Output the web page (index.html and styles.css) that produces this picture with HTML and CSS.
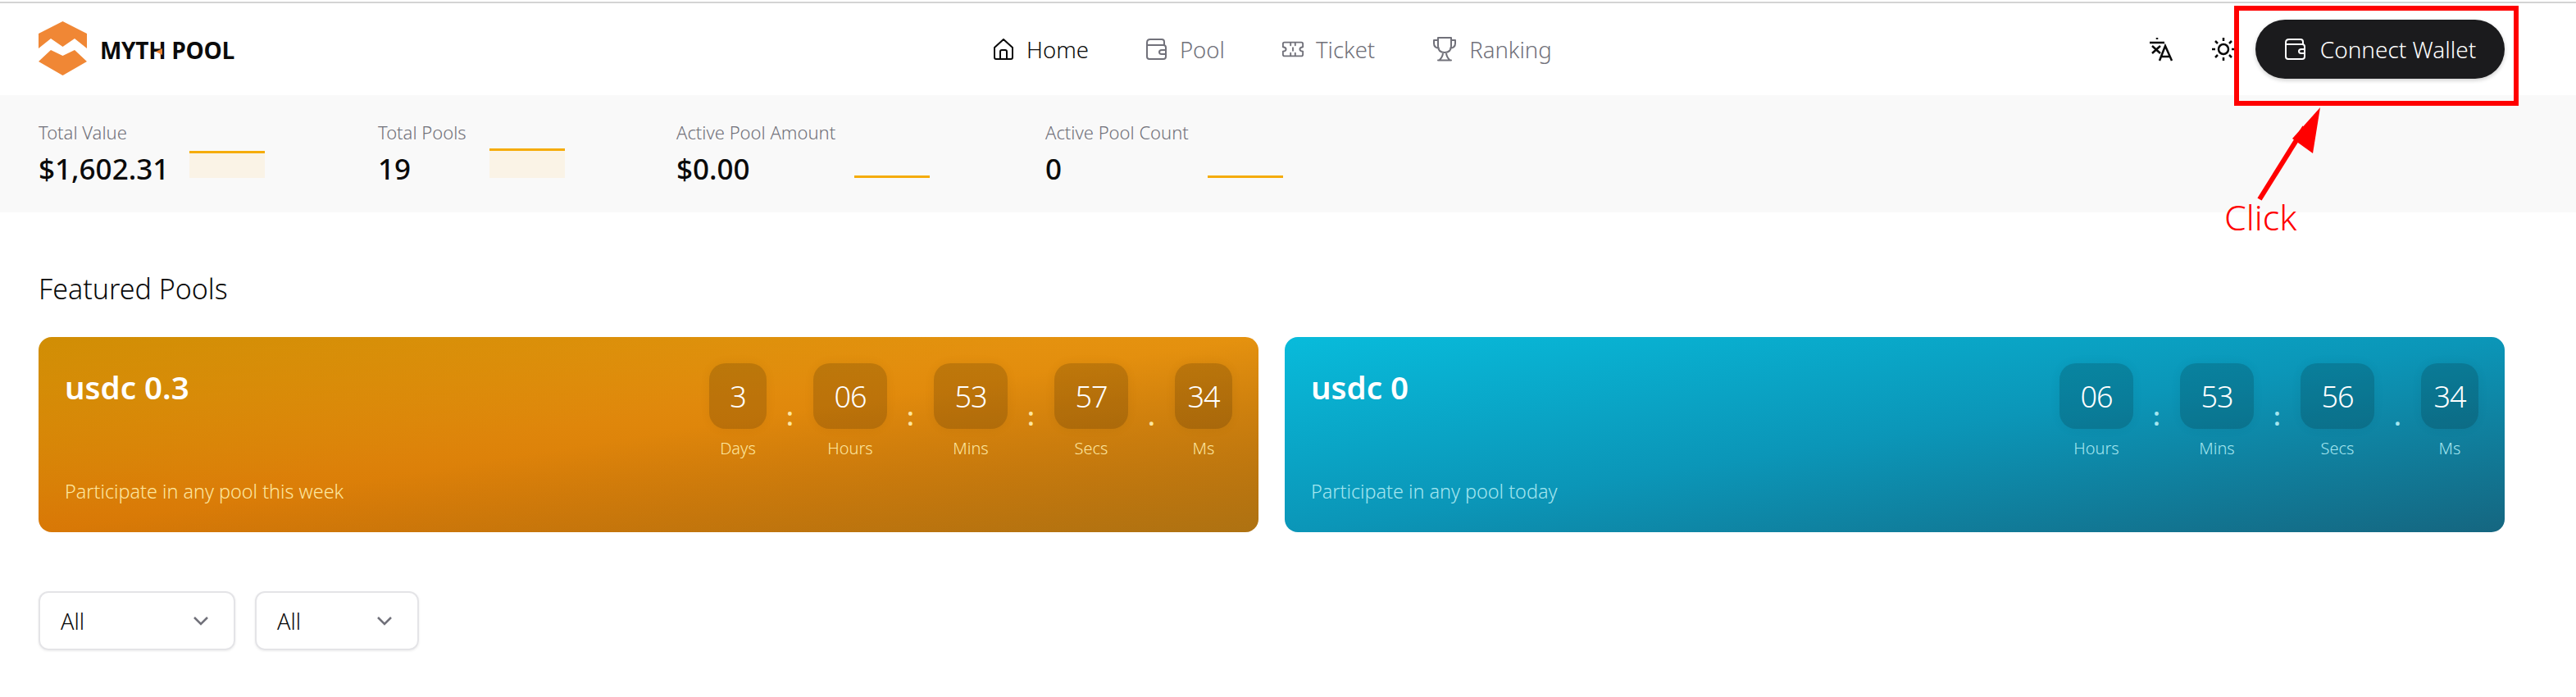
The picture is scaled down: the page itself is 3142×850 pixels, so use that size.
FILE: index.html
```html
<!DOCTYPE html>
<html lang="en">
<head>
  <meta charset="UTF-8">
  <title>Myth Pool</title>
  <link rel="stylesheet" href="styles.css">
</head>
<body>

  <header class="topbar">
    <a class="logo">
      <svg class="logo-mark" viewBox="0 0 59 66" width="59" height="66">
        <path fill="#f08735" d="M29.5 0 L59 15 V33 L44 21 L29.5 31 L15 21 L0 33 V15 Z"/>
        <path fill="#f08735" d="M0 49 L15 35 L29.5 42 L44 35 L59 49 L29.5 66 Z"/>
      </svg>
      <span class="logo-text">MYTH POOL<i class="logo-wedge"></i></span>
    </a>

    <nav class="nav">
      <a class="nav-item active">
        <svg class="nav-icon" viewBox="0 0 28 28"><path d="M3 12 L14 2 L25 12 V24 Q25 26 23 26 H5 Q3 26 3 24 Z M10 26 V17 Q10 15 12 15 H16 Q18 15 18 17 V26"/></svg>
        Home
      </a>
      <a class="nav-item">
        <svg class="nav-icon" viewBox="0 0 28 28"><path d="M23 9 V5 Q23 2 20 2 H6 Q2 2 2 6 V23 Q2 26 5 26 H22 Q25 26 25 23 V12 Q25 9 22 9 H2 M25 15 H20 Q17 15 17 17.5 Q17 20 20 20 H25"/></svg>
        Pool
      </a>
      <a class="nav-item">
        <svg class="nav-icon" viewBox="0 0 30 28"><path d="M4 5 H26 Q28 5 28 7 V11 Q24 11.500 24 14 Q24 16.500 28 17 V21 Q28 23 26 23 H4 Q2 23 2 21 V17 Q6 16.500 6 14 Q6 11.500 2 11 V7 Q2 5 4 5 Z M12 5 V9 M18 5 V9 M15 12 V16 M12 19 V23 M18 19 V23"/></svg>
        Ticket
      </a>
      <a class="nav-item">
        <svg class="nav-icon nav-icon-wide" viewBox="0 0 32 32"><path d="M8 2 H24 V12 Q24 20 16 20 Q8 20 8 12 Z M8 5 H3 V9 Q3 14 9 15 M24 5 H29 V9 Q29 14 23 15 M14 20 Q14 25 10 29 M18 20 Q18 25 22 29 M8 29.500 H24"/></svg>
        Ranking
      </a>
    </nav>

    <div class="actions">
      <svg class="action-icon" viewBox="0 0 30 30"><path d="M1 7 H19 M10 1 V3 M4 11 L14 20 M14 11 L4 20 M13 29 L20 11 L28 29 M15.500 24 H25"/></svg>
      <svg class="action-icon" viewBox="0 0 30 30"><circle cx="15" cy="15" r="6"/><path d="M15 1 V5 M15 25 V29 M1 15 H5 M25 15 H29 M5 5 L8 8 M22 22 L25 25 M5 25 L8 22 M22 8 L25 5"/></svg>
      <button class="connect-btn">
        <svg class="btn-icon" viewBox="0 0 28 28"><path d="M23 8 V5 Q23 2 20 2 H6 Q2 2 2 6 V23 Q2 26 5 26 H22 Q25 26 25 23 V11 Q25 8 22 8 H2 M25 14 H21 Q18 14 18 16.500 Q18 19 21 19 H25"/></svg>
        Connect Wallet
      </button>
    </div>
  </header>

  <section class="stats">
    <div class="stat stat-value">
      <div class="stat-text">
        <div class="stat-label">Total Value</div>
        <div class="stat-number">$1,602.31</div>
      </div>
      <div class="spark" style="height:33px"></div>
    </div>
    <div class="stat stat-pools">
      <div class="stat-text">
        <div class="stat-label">Total Pools</div>
        <div class="stat-number">19</div>
      </div>
      <div class="spark" style="height:36px"></div>
    </div>
    <div class="stat stat-amount">
      <div class="stat-text">
        <div class="stat-label">Active Pool Amount</div>
        <div class="stat-number">$0.00</div>
      </div>
      <div class="spark" style="height:2px"></div>
    </div>
    <div class="stat stat-count">
      <div class="stat-text">
        <div class="stat-label">Active Pool Count</div>
        <div class="stat-number">0</div>
      </div>
      <div class="spark" style="height:2px"></div>
    </div>
  </section>

  <main class="content">
    <h2 class="section-title">Featured Pools</h2>

    <div class="cards">
      <div class="card card-orange">
        <div class="card-info">
          <div class="card-title">usdc 0.3</div>
          <div class="card-sub">Participate in any pool this week</div>
        </div>
        <div class="timer">
          <div class="unit"><div class="num num-sm">3</div><div class="unit-label">Days</div></div>
          <div class="sep">:</div>
          <div class="unit"><div class="num">06</div><div class="unit-label">Hours</div></div>
          <div class="sep">:</div>
          <div class="unit"><div class="num">53</div><div class="unit-label">Mins</div></div>
          <div class="sep">:</div>
          <div class="unit"><div class="num">57</div><div class="unit-label">Secs</div></div>
          <div class="sep">.</div>
          <div class="unit"><div class="num num-sm">34</div><div class="unit-label">Ms</div></div>
        </div>
      </div>

      <div class="card card-blue">
        <div class="card-info">
          <div class="card-title">usdc 0</div>
          <div class="card-sub">Participate in any pool today</div>
        </div>
        <div class="timer">
          <div class="unit"><div class="num">06</div><div class="unit-label">Hours</div></div>
          <div class="sep">:</div>
          <div class="unit"><div class="num">53</div><div class="unit-label">Mins</div></div>
          <div class="sep">:</div>
          <div class="unit"><div class="num">56</div><div class="unit-label">Secs</div></div>
          <div class="sep">.</div>
          <div class="unit"><div class="num num-sm">34</div><div class="unit-label">Ms</div></div>
        </div>
      </div>
    </div>

    <div class="filters">
      <div class="select select-wide">All
        <svg class="chevron" viewBox="0 0 20 12"><path d="M2 2 L10 10 L18 2"/></svg>
      </div>
      <div class="select">All
        <svg class="chevron" viewBox="0 0 20 12"><path d="M2 2 L10 10 L18 2"/></svg>
      </div>
    </div>
  </main>

  <!-- red annotation on top of the page -->
  <div class="mark-box"></div>
  <svg class="mark-arrow" viewBox="0 0 90 120" width="90" height="120">
    <path d="M6 116 L61 28" stroke="#ff0000" stroke-width="6" fill="none"/>
    <path d="M80 4 L46 42 L71 60 Z" fill="#ff0000"/>
  </svg>
  <div class="mark-text">Click</div>

</body>
</html>
```

FILE: styles.css
```css
html, body {
  margin: 0;
  padding: 0;
  background-color: #fff;
  font-family: "Noto Sans", sans-serif;
  color: #0a0a0a;
}
body {
  position: relative;
  height: 850px;
  overflow: hidden;
  padding-top: 2px;
  box-sizing: border-box;
}
a {
  text-decoration: none;
}

/* top bar */
.topbar {
  height: 112px;
  border-top: 2px solid #d4d4d4;
  padding: 0 87px 0 47px;
  position: relative;
  display: flex;
  align-items: center;
  justify-content: space-between;
}
.logo {
  display: flex;
  align-items: center;
  gap: 16px;
  margin-top: -2px;
}
.logo-mark {
  display: block;
}
.logo-text {
  position: relative;
  font-family: "Open Sans", sans-serif;
  font-weight: 700;
  font-size: 28px;
  letter-spacing: -0.3px;
  color: #0b0b0b;
  white-space: nowrap;
  margin-top: 4px;
}
.logo-wedge {
  position: absolute;
  left: 68px;
  top: 17px;
  width: 0;
  height: 0;
  border-top: 4px solid transparent;
  border-bottom: 4px solid transparent;
  border-right: 8px solid #f08735;
}
.nav {
  position: absolute;
  left: 1210px;
  top: 0;
  height: 112px;
  display: flex;
  align-items: center;
  gap: 69px;
}
.nav-item {
  display: flex;
  align-items: center;
  gap: 14px;
  font-size: 27.500px;
  font-weight: 300;
  color: #71717a;
}
.nav-item.active {
  color: #0a0a0a;
}
.nav-icon {
  width: 28px;
  height: 28px;
  fill: none;
  stroke: currentColor;
  stroke-width: 2;
  stroke-linejoin: round;
  stroke-linecap: round;
}
.nav-icon-wide {
  width: 32px;
  height: 32px;
}
.actions {
  display: flex;
  align-items: center;
  gap: 0;
}
.action-icon {
  width: 30px;
  height: 30px;
  margin-right: 46px;
  fill: none;
  stroke: #0a0a0a;
  stroke-width: 2.500;
}
.action-icon + .action-icon {
  margin-right: 24px;
}
.connect-btn {
  width: 304px;
  height: 72px;
  border: none;
  border-radius: 36px;
  background-color: #1b1b1d;
  box-shadow: 0 2px 5px rgba(0, 0, 0, 0.2);
  color: #fff;
  font-family: inherit;
  font-size: 28px;
  font-weight: 300;
  display: flex;
  align-items: center;
  justify-content: center;
  gap: 16px;
}
.btn-icon {
  width: 28px;
  height: 28px;
  fill: none;
  stroke: #fff;
  stroke-width: 2;
  stroke-linejoin: round;
}

/* stats band */
.stats {
  height: 143px;
  box-sizing: border-box;
  padding: 0 47px 42px;
  background-color: #f9f9f9;
  display: flex;
  align-items: flex-end;
}
.stat {
  display: flex;
  align-items: flex-end;
}
.stat-value { width: 414px; }
.stat-pools { width: 364px; }
.stat-amount { width: 450px; }
.stat-value .stat-text { width: 184px; }
.stat-pools .stat-text { width: 136px; }
.stat-amount .stat-text { width: 217px; }
.stat-count .stat-text { width: 198px; }
.stat-label {
  font-size: 22px;
  font-weight: 300;
  line-height: 28px;
  color: #71717a;
  white-space: nowrap;
  position: relative;
  top: -2px;
}
.stat-number {
  font-size: 35px;
  font-weight: 500;
  line-height: 46px;
  margin-top: 6px;
  margin-bottom: -12px;
  white-space: nowrap;
}
.spark {
  width: 92px;
  box-sizing: border-box;
  border-top: 3px solid #f5ac0a;
  background-color: #faf3e6;
}

/* main */
.content {
  padding: 0 87px 0 47px;
}
.section-title {
  margin: 0;
  padding-top: 70px;
  font-size: 34px;
  font-weight: 300;
  line-height: 46px;
}
.cards {
  margin-top: 36px;
  display: grid;
  grid-template-columns: 1fr 1fr;
  gap: 32px;
}
.card {
  height: 238px;
  border-radius: 16px;
  box-sizing: border-box;
  padding: 32px;
  display: flex;
  justify-content: space-between;
  color: #fff;
}
.card-orange {
  background:
    linear-gradient(170deg, rgba(200, 140, 0, 0.7) 0%, rgba(200, 140, 0, 0) 45%),
    linear-gradient(to top left, #ae7212 0%, rgba(174, 114, 18, 0) 50%),
    linear-gradient(to bottom, #e5920f, #d87806);
}
.card-blue {
  background: linear-gradient(to bottom right, #08bbdb 0%, #0b96b8 50%, #156680 100%);
}
.card-info {
  display: flex;
  flex-direction: column;
  justify-content: space-between;
}
.card-title {
  font-size: 38.500px;
  font-weight: 600;
  line-height: 50px;
  margin-top: 4px;
}
.card-sub {
  font-size: 23.400px;
  font-weight: 300;
  line-height: 30px;
  margin-bottom: 3px;
}
.card-orange .card-sub,
.card-orange .unit-label,
.card-orange .sep {
  color: #fde7a0;
}
.card-blue .card-sub,
.card-blue .unit-label,
.card-blue .sep {
  color: #a5e6f0;
}
.timer {
  display: flex;
  align-items: flex-start;
}
.unit {
  display: flex;
  flex-direction: column;
  align-items: center;
}
.num {
  width: 90px;
  height: 80px;
  border-radius: 20px;
  background-color: rgba(0, 0, 0, 0.16);
  box-shadow: 0 0 14px rgba(0, 0, 0, 0.05);
  font-size: 36px;
  font-weight: 300;
  letter-spacing: -1px;
  display: flex;
  align-items: center;
  justify-content: center;
}
.num-sm {
  width: 70px;
}
.unit-label {
  font-size: 20px;
  font-weight: 300;
  line-height: 28px;
  margin-top: 10px;
}
.sep {
  width: 57px;
  height: 80px;
  font-size: 30px;
  font-weight: 600;
  line-height: 30px;
  text-align: center;
  display: flex;
  align-items: flex-end;
  justify-content: center;
}

/* filter dropdowns */
.filters {
  margin-top: 72px;
  display: flex;
  gap: 24px;
}
.select {
  width: 200px;
  height: 72px;
  box-sizing: border-box;
  padding: 0 30px 0 25px;
  border: 2px solid #e4e4e7;
  border-radius: 12px;
  box-shadow: 0 1px 3px rgba(0, 0, 0, 0.08);
  font-size: 27px;
  font-weight: 300;
  display: flex;
  align-items: center;
  justify-content: space-between;
}
.select-wide {
  width: 240px;
}
.chevron {
  width: 20px;
  height: 12px;
  fill: none;
  stroke: #71717a;
  stroke-width: 2.500;
}

/* red annotation */
.mark-box {
  position: absolute;
  left: 2725px;
  top: 7px;
  width: 347px;
  height: 122px;
  box-sizing: border-box;
  border: 6px solid #ff0000;
}
.mark-arrow {
  position: absolute;
  left: 2750px;
  top: 127px;
}
.mark-text {
  position: absolute;
  left: 2713px;
  top: 243px;
  font-size: 43px;
  font-weight: 300;
  line-height: 44px;
  color: #ff0000;
}
```
